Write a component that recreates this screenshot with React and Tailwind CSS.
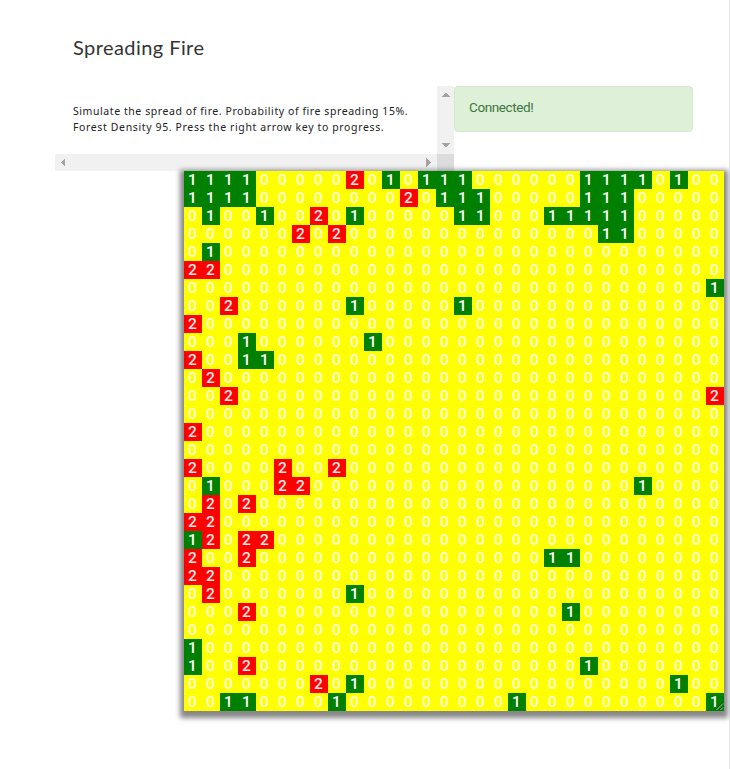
const ROWS = [
  '111100000201011100000011110100',
  '111100000000201110000011100000',
  '010010020100000110001111100000',
  '000000202000000000000001100000',
  '010000000000000000000000000000',
  '220000000000000000000000000000',
  '000000000000000000000000000001',
  '002000000100000100000000000000',
  '200000000000000000000000000000',
  '000100000010000000000000000000',
  '200110000000000000000000000000',
  '020000000000000000000000000000',
  '002000000000000000000000000002',
  '000000000000000000000000000000',
  '200000000000000000000000000000',
  '000000000000000000000000000000',
  '200002002000000000000000000000',
  '010002200000000000000000010000',
  '020200000000000000000000000000',
  '220000000000000000000000000000',
  '120220000000000000000000000000',
  '200200000000000000001100000000',
  '220000000000000000000000000000',
  '020000000100000000000000000000',
  '000200000000000000000100000000',
  '000000000000000000000000000000',
  '100000000000000000000000000000',
  '100200000000000000000010000000',
  '000000020100000000000000000100',
  '001100001000000000100000000001',
];

const CELL = {
  0: 'bg-[#ffff00] pr-px text-white/85',
  1: 'bg-[#008000] pr-px text-white',
  2: 'bg-[#ff0000] pr-px text-white/90',
};

function Arrow({ d }) {
  return (
    <svg viewBox="0 0 17 17" className="block size-[17px] fill-[#a3a3a3]" shapeRendering="crispEdges">
      <path d={d} />
    </svg>
  );
}

function Description() {
  return (
    <div className="grid h-[85px] w-[399px] grid-cols-[382px_17px] grid-rows-[68px_17px]">
      <div className="overflow-hidden whitespace-nowrap pl-[18px] pt-[17px] font-['Noto_Sans',sans-serif] text-[10.5px] leading-4 text-[#222]">
        <p className="tracking-[0.57px]">Simulate the spread of fire. Probability of fire spreading 15%.</p>
        <p className="tracking-[0.63px]">Forest Density 95. Press the right arrow key to progress.</p>
      </div>
      <div className="flex flex-col justify-between bg-[#f1f1f1]">
        <Arrow d="M4 11 L8.5 6.5 L13 11 Z" />
        <Arrow d="M4 6 L13 6 L8.5 10.5 Z" />
      </div>
      <div className="flex justify-between bg-[#f1f1f1]">
        <Arrow d="M10 4 L10 13 L5.5 8.5 Z" />
        <Arrow d="M6 4 L6 13 L10.5 8.5 Z" />
      </div>
      <div className="bg-[#dcdcdc]" />
    </div>
  );
}

function Forest() {
  return (
    <div className="relative ml-[184px] grid w-[540px] grid-cols-[repeat(30,18px)] grid-rows-[repeat(30,18px)] text-center font-['Roboto',sans-serif] text-[15.5px] font-medium leading-[19px] shadow-[0_3px_5px_4px_#888]">
      {ROWS.flatMap((row, y) =>
        [...row].map((v, x) => (
          <div key={`${y}-${x}`} className={CELL[v]}>
            {v}
          </div>
        ))
      )}
      <svg viewBox="0 0 9 9" className="absolute bottom-0 right-0 size-[9px]" fill="none">
        <path d="M0.5 7.5 L7.5 0.5 M4.5 7.5 L7.5 4.5" stroke="#003c00" />
        <path d="M1.5 8 L8 1.5 M5.5 8 L8 5.5" stroke="#b8dcb8" strokeWidth="0.8" />
      </svg>
    </div>
  );
}

export default function App() {
  return (
    <div className="h-[769px] w-[730px] overflow-hidden bg-white">
      <main className="h-full w-[730px] border-r border-[#e5e5e5]">
        <h1 className="h-[86px] whitespace-nowrap pl-[73px] pt-[33px] font-['Lato',sans-serif] text-[20px] leading-7 tracking-[0.43px] text-[#333]">
          Spreading Fire
        </h1>
        <div className="flex h-[85px] items-start pl-[55px]">
          <Description />
          <div className="h-[46px] w-[239px] rounded-[4px] border border-[#d0e9c6] bg-[#dff0d8] px-[14px] pt-[10px] font-['Roboto',sans-serif] text-[13.5px] leading-5 tracking-[-0.4px] text-[#3c763d]">
            Connected!
          </div>
        </div>
        <Forest />
      </main>
    </div>
  );
}
